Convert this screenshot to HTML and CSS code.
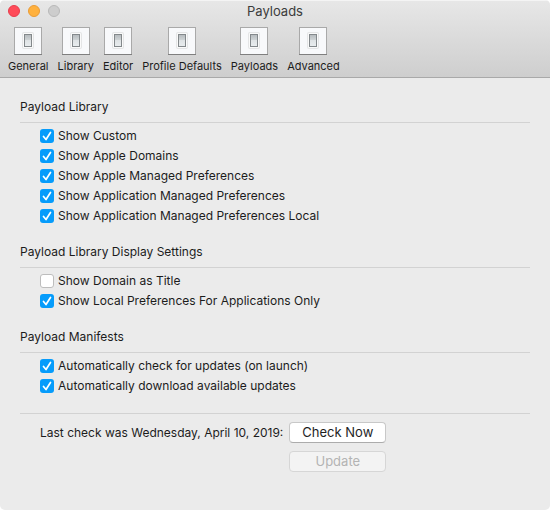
FILE: index.html
```html
<!DOCTYPE html>
<html lang="en">
<head>
<meta charset="utf-8">
<title>Payloads</title>
<link rel="stylesheet" href="styles.css">
</head>
<body>
<svg class="symbols" aria-hidden="true">
  <defs>
    <linearGradient id="shade" x1="0" y1="0" x2="0" y2="1">
      <stop offset="0" stop-color="#b4b9bc"/>
      <stop offset=".45" stop-color="#ced3d5"/>
      <stop offset=".5" stop-color="#dfe3e5"/>
      <stop offset="1" stop-color="#e9edef"/>
    </linearGradient>
    <symbol id="switch" viewBox="0 0 28 28">
      <rect width="28" height="28" fill="#a9a9a9"/>
      <rect y="27" width="28" height="1" fill="#7f7f7f"/>
      <rect x="1" y="1" width="26" height="26" fill="#f8f9fb"/>
      <rect x="8" y="5" width="12" height="17" rx="2" fill="#e4e5e6"/>
      <rect x="9" y="6" width="10" height="15" rx="1" fill="#fafafa"/>
      <rect x="10.5" y="7.500" width="7" height="12" fill="url(#shade)" stroke="#83888b"/>
    </symbol>
  </defs>
</svg>
<div class="window">
  <header class="titlebar">
    <div class="caption">
      <div class="lights">
        <button class="light close" aria-label="Close"></button>
        <button class="light minimize" aria-label="Minimize"></button>
        <button class="light zoom" aria-label="Zoom" disabled></button>
      </div>
      <h1>Payloads</h1>
    </div>
    <nav class="toolbar">
      <button class="tool"><svg><use href="#switch"/></svg>General</button>
      <button class="tool"><svg><use href="#switch"/></svg>Library</button>
      <button class="tool"><svg><use href="#switch"/></svg>Editor</button>
      <button class="tool"><svg><use href="#switch"/></svg>Profile Defaults</button>
      <button class="tool"><svg><use href="#switch"/></svg>Payloads</button>
      <button class="tool"><svg><use href="#switch"/></svg>Advanced</button>
    </nav>
  </header>
  <main>
    <section>
      <h2>Payload Library</h2>
      <div class="options">
        <label><input type="checkbox" checked>Show Custom</label>
        <label><input type="checkbox" checked>Show Apple Domains</label>
        <label><input type="checkbox" checked>Show Apple Managed Preferences</label>
        <label><input type="checkbox" checked>Show Application Managed Preferences</label>
        <label><input type="checkbox" checked>Show Application Managed Preferences Local</label>
      </div>
    </section>
    <section>
      <h2>Payload Library Display Settings</h2>
      <div class="options">
        <label><input type="checkbox">Show Domain as Title</label>
        <label><input type="checkbox" checked>Show Local Preferences For Applications Only</label>
      </div>
    </section>
    <section>
      <h2>Payload Manifests</h2>
      <div class="options">
        <label><input type="checkbox" checked>Automatically check for updates (on launch)</label>
        <label><input type="checkbox" checked>Automatically download available updates</label>
      </div>
    </section>
    <div class="updates">
      <p>Last check was Wednesday, April 10, 2019:</p>
      <div class="actions">
        <button class="push">Check Now</button>
        <button class="push" disabled>Update</button>
      </div>
    </div>
  </main>
</div>
</body>
</html>
```

FILE: styles.css
```css
* { box-sizing: border-box; }

body {
  margin: 0;
  background: #fff;
  color: #1c1c1c;
  font: 12px/20px Inter, sans-serif;
}

h1, h2, p { margin: 0; font: inherit; }
button { margin: 0; padding: 0; border: 0; background: none; font: inherit; color: inherit; }
.symbols { position: absolute; width: 0; height: 0; }

.window {
  min-height: 100vh;
  background: #ebebeb;
  border-radius: 5px;
  overflow: hidden;
}

.titlebar {
  background: linear-gradient(#e7e7e7, #cecece);
  border-top: 1px solid #f4f4f4;
  border-bottom: 1px solid #a9a9a9;
}

.caption {
  display: grid;
  grid-template-columns: 1fr auto 1fr;
  align-items: center;
  height: 20px;
  padding: 0 8px;
}

.caption h1 { font-size: 13px; color: #3c3c3c; }
.lights { display: flex; gap: 8px; }
.light { width: 12px; height: 12px; border: 1px solid; border-radius: 50%; }
.close { background: #ff4b59; border-color: #e73d4c; }
.minimize { background: #ffb13e; border-color: #e99b35; }
.zoom { background: #cdcdcd; border-color: #b8b8b8; }

.toolbar { display: flex; gap: 9px; padding: 6px 8px 3px; }

.tool {
  display: flex;
  flex-direction: column;
  align-items: center;
  gap: 3px;
  font-size: 11px;
  line-height: 16px;
}

.tool svg { width: 28px; height: 28px; }

main {
  display: flex;
  flex-direction: column;
  gap: 16px;
  padding: 19px 20px;
}

h2 {
  height: 26px;
  border-bottom: 1px solid #d2d2d2;
  line-height: 20px;
}

.options {
  display: flex;
  flex-direction: column;
  align-items: flex-start;
  padding: 3px 20px 0;
}

.options label { display: flex; align-items: center; gap: 4px; }

.options input {
  appearance: none;
  width: 14px;
  height: 14px;
  margin: 0;
  border: 1px solid #bdbdbd;
  border-radius: 3px;
  background: #fff;
}

.options input:checked {
  border: 0;
  background: #069cfb url("data:image/svg+xml,%3Csvg xmlns='http://www.w3.org/2000/svg' viewBox='0 0 14 14'%3E%3Cpath d='M3.500 7.500L6 10.500L10.500 3.500' fill='none' stroke='white' stroke-width='1.700' stroke-linecap='round' stroke-linejoin='round'/%3E%3C/svg%3E");
}

.updates {
  display: flex;
  gap: 6px;
  margin-top: 1px;
  padding: 8px 20px 0;
  border-top: 1px solid #d2d2d2;
}

.updates p { line-height: 22px; }
.actions { display: flex; flex-direction: column; gap: 8px; }

.push {
  width: 97px;
  height: 21px;
  border: 1px solid #c8c8c8;
  border-bottom-color: #acacac;
  border-radius: 4px;
  background: #fff;
  color: #1e1e1e;
  font-size: 13px;
  line-height: 19px;
}

.push:disabled { background: #f3f3f3; border-color: #d6d6d6; color: #b4b4b4; }
```
